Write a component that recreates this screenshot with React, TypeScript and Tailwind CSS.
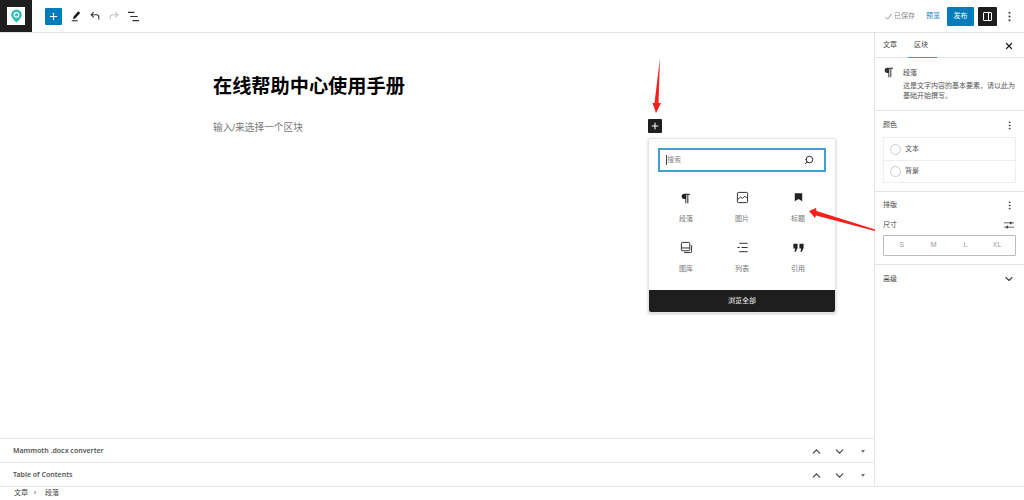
import { ChevronDown, ChevronUp, EllipsisVertical, Plus, Search, X } from "lucide-react";

const font = "font-['Liberation_Sans','Noto_Sans_CJK_SC',sans-serif]";

const ParagraphIcon = ({ className }: { className?: string }) => (
  <svg viewBox="0 0 24 24" className={className} fill="currentColor">
    <path d="M18 5.500H9.500a4 4 0 0 0 0 8H11V20h1.500V7H14v13h1.500V7H18z" />
  </svg>
);

const MetaRow = ({ title }: { title: string }) => (
  <div className="flex h-6 items-center border-t border-[#e4e4e4] pl-[13px] pr-[9px] pt-[1px]">
    <span className="flex-1 font-['Noto_Sans',sans-serif] text-[7px] font-semibold text-[#555]">{title}</span>
    <ChevronUp size={13} strokeWidth={2.2} className="mr-[10px] text-[#444]" />
    <ChevronDown size={13} strokeWidth={2.2} className="mr-[15px] text-[#444]" />
    <span className="h-0 w-0 border-x-[2.5px] border-t-[3px] border-x-transparent border-t-[#777]" />
  </div>
);

const blocks = [
  {
    label: "段落",
    icon: <ParagraphIcon className="h-4 w-4" />,
  },
  {
    label: "图片",
    icon: (
      <svg viewBox="0 0 14 14" className="h-[13px] w-[13px]" fill="none" stroke="currentColor">
        <rect x="1.500" y="1.500" width="11" height="11" rx="1" />
        <path d="M2 9l3-2.500 2 1.500 2.500-2.500L12 8" />
      </svg>
    ),
  },
  {
    label: "标题",
    icon: (
      <svg viewBox="0 0 14 14" className="h-[13px] w-[13px]" fill="currentColor">
        <path d="M3 2.500h8v8.500L7 8.500 3 11z" />
      </svg>
    ),
  },
  {
    label: "图库",
    icon: (
      <svg viewBox="0 0 14 14" className="h-[13px] w-[13px]" fill="none" stroke="currentColor">
        <rect x="1.500" y="1.500" width="9" height="9" rx="1" />
        <path d="M2 7.500h8M12.500 4.500v7a1 1 0 0 1-1 1H4.500" />
      </svg>
    ),
  },
  {
    label: "列表",
    icon: (
      <svg viewBox="0 0 14 14" className="h-[13px] w-[13px]" fill="none" stroke="currentColor">
        <path d="M3.500 2.500h9M1.500 7h2.500M6 7h6.500M3.500 11.500h9" />
      </svg>
    ),
  },
  {
    label: "引用",
    icon: (
      <svg viewBox="0 0 14 14" className="h-[13px] w-[13px]" fill="currentColor">
        <path d="M1.500 3h4.500v4.500L4 11.500H2.500L3.500 8h-2zM8 3h4.500v4.500l-2 4H9L10 8H8z" />
      </svg>
    ),
  },
];

const App = () => {
  return (
    <div className={`flex h-[500px] w-[1024px] flex-col overflow-hidden bg-white text-[#1e1e1e] ${font}`}>
      {/* top bar */}
      <header className="flex h-[33px] shrink-0 items-center border-b border-[#e4e4e4]">
        <div className="flex h-[32px] w-[32px] items-center justify-center bg-[#1e1e1e]">
          <div className="flex h-[18px] w-[18px] items-center justify-center bg-white">
            <svg viewBox="0 0 16 18" className="h-4 w-[13px]">
              <path d="M8 1a6.500 6.500 0 0 0-6.500 6.500C1.500 12 8 17 8 17s6.500-5 6.500-9.500A6.500 6.500 0 0 0 8 1z" fill="#2fc0b5" />
              <circle cx="8" cy="7.500" r="3.500" fill="white" />
              <circle cx="8" cy="7.500" r="2" fill="#2fc0b5" />
            </svg>
          </div>
        </div>
        <div className="ml-[13px] flex h-[17px] w-[17px] items-center justify-center rounded-[1px] bg-[#007cba] text-white">
          <Plus size={11} strokeWidth={2.5} />
        </div>
        <svg viewBox="0 0 14 14" className="ml-[8px] h-[12px] w-[12px] text-[#1e1e1e]" fill="currentColor">
          <path d="M9.500 1.500l2.500 2L6 10 3.500 10.500 4 8zM2 12h7v1H2z" />
        </svg>
        <svg viewBox="0 0 14 14" className="ml-[7px] h-[12px] w-[12px] text-[#333]" fill="none" stroke="currentColor" strokeWidth="1.300">
          <path d="M5.500 2.500L2.500 5.500l3 3M3 5.500h5.500a3 3 0 0 1 3 3V11" />
        </svg>
        <svg viewBox="0 0 14 14" className="ml-[7px] h-[12px] w-[12px] text-[#c4c4c4]" fill="none" stroke="currentColor" strokeWidth="1.300">
          <path d="M8.500 2.500l3 3-3 3M11 5.500H5.500a3 3 0 0 0-3 3V11" />
        </svg>
        <svg viewBox="0 0 14 14" className="ml-[7px] h-[13px] w-[13px] text-[#333]" fill="none" stroke="currentColor" strokeWidth="1.200">
          <path d="M1 2.500h7M3.500 7h8M6 11.500h7" />
        </svg>
        <div className="ml-auto flex items-center">
          <svg viewBox="0 0 10 10" className="h-[9px] w-[9px] text-[#8a8a8a]" fill="none" stroke="currentColor">
            <path d="M1.500 5.500L4 8l4.500-6" />
          </svg>
          <span className="ml-[1px] text-[7px] text-[#8a8a8a]">已保存</span>
          <span className="ml-[11px] text-[7px] text-[#007cba]">预览</span>
          <div className="ml-[7px] flex h-[19px] w-[27px] items-center justify-center rounded-[1px] bg-[#007cba] text-[7px] text-white">
            发布
          </div>
          <div className="ml-[4px] flex h-[19px] w-[19px] items-center justify-center rounded-[1px] bg-[#1e1e1e]">
            <div className="flex h-[9px] w-[9px] justify-end rounded-[1px] border border-white">
              <div className="w-[3px] border-l border-white" />
            </div>
          </div>
          <EllipsisVertical size={13} className="ml-[6px] mr-[8px] text-[#444]" />
        </div>
      </header>

      <div className="flex min-h-0 flex-1">
        {/* editor */}
        <main className="relative flex min-w-0 flex-1 flex-col">
          <div className="flex-1 pl-[213px] pt-[41px]">
            <h1 className="text-[19.2px] leading-[26px] font-bold text-black">在线帮助中心使用手册</h1>
            <p className="mt-[21px] text-[9.7px] leading-[14px] text-[#777]">输入/来选择一个区块</p>
          </div>

          <div className="absolute left-[648px] top-[86px] flex h-[14px] w-[14px] items-center justify-center rounded-[1px] bg-[#1e1e1e] text-white">
            <Plus size={10} strokeWidth={2.5} />
          </div>

          {/* block inserter */}
          <div className="absolute left-[648px] top-[105px] flex h-[175px] w-[188px] flex-col rounded-[2px] border border-[#e4e4e4] bg-white shadow-[0_1px_3px_rgba(0,0,0,0.2)]">
            <div className="mx-[9px] mt-[9px] flex h-[25px] items-center border-2 border-[#3f9fcf] pl-[6px] pr-[10px]">
              <span className="h-[10px] w-px bg-[#444]" />
              <span className="flex-1 text-[7px] text-[#888]">搜索</span>
              <Search size={10} strokeWidth={2.2} className="-scale-x-100 text-[#1e1e1e]" />
            </div>
            <div className="grid flex-1 grid-cols-3 content-start px-[9px] pt-[18px]">
              {blocks.map((b) => (
                <div key={b.label} className="flex h-[50px] flex-col items-center text-[#222]">
                  <div className="flex h-4 items-center">{b.icon}</div>
                  <span className="mt-[8px] text-[7px] leading-[10px] text-[#777]">{b.label}</span>
                </div>
              ))}
            </div>
            <div className="flex h-[24px] items-center justify-center rounded-b-[2px] bg-[#1e1e1e] text-[7px] font-medium text-[#ddd]">
              浏览全部
            </div>
          </div>

          {/* arrows */}
          <svg className="absolute left-[640px] top-[20px] h-[62px] w-[30px]" viewBox="0 0 30 62">
            <path d="M20 5L18.500 50 21 50 16 60 12.500 50 14.500 50z" fill="#f5201c" />
          </svg>
          <svg className="absolute left-[805px] top-[170px] h-[40px] w-[70px]" viewBox="0 0 70 40">
            <path d="M4 8L11 5 11.500 8 70 26.500 70 28 11 12.500 10 15z" fill="#f5201c" />
          </svg>

          <MetaRow title="Mammoth .docx converter" />
          <MetaRow title="Table of Contents" />
        </main>

        {/* sidebar */}
        <aside className="flex w-[150px] shrink-0 flex-col border-l border-[#e4e4e4] text-[7px] text-[#444]">
          <div className="flex h-[25px] items-center border-b border-[#e4e4e4] pl-[8px] pr-[10px] pt-[1px]">
            <span>文章</span>
            <span className="relative ml-[17px] flex h-full items-center">
              区块
              <span className="absolute -left-[6px] -right-[9px] -bottom-px h-[1.5px] bg-[#3b9cc9]" />
            </span>
            <X size={10} strokeWidth={3} className="ml-auto text-[#222]" />
          </div>
          <div className="flex h-[53px] border-b border-[#e4e4e4] pl-[6px] pr-[8px] pt-[6px]">
            <ParagraphIcon className="h-4 w-4 shrink-0 text-[#333]" />
            <div className="ml-[6px] mt-[4px]">
              <div className="leading-[10px]">段落</div>
              <p className="mt-[3px] leading-[10px] text-[#555]">这是文字内容的基本要素，请以此为基础开始撰写。</p>
            </div>
          </div>
          <div className="border-b border-[#e4e4e4] px-[8px] pb-[8px] pt-[8px]">
            <div className="flex h-[12px] items-center justify-between">
              <span>颜色</span>
              <EllipsisVertical size={11} className="mr-[1px]" />
            </div>
            <div className="mt-[6px] rounded-[1px] border border-[#eee]">
              {["文本", "背景"].map((t, i) => (
                <div key={t} className={`flex h-[22px] items-center pl-[6px] ${i ? "border-t border-[#eee]" : ""}`}>
                  <span className="h-[11px] w-[11px] rounded-full border border-[#ccc]" />
                  <span className="ml-[4px] text-[#555]">{t}</span>
                </div>
              ))}
            </div>
          </div>
          <div className="border-b border-[#e4e4e4] px-[8px] pb-[8px] pt-[7px]">
            <div className="flex h-[12px] items-center justify-between">
              <span>排版</span>
              <EllipsisVertical size={11} className="mr-[1px]" />
            </div>
            <div className="mt-[8px] flex h-[12px] items-center justify-between">
              <span>尺寸</span>
              <svg viewBox="0 0 12 10" className="mr-[2px] h-[10px] w-[10px] text-[#333]" fill="currentColor">
                <path d="M0 2h12v1H0zM0 7h12v1H0zM7 1h2v3H7zM3 6h2v3H3z" />
              </svg>
            </div>
            <div className="mt-[4px] grid h-[21px] grid-cols-4 items-center rounded-[1px] border border-[#bbb] px-[2px] text-center text-[#999]">
              <span>S</span>
              <span>M</span>
              <span>L</span>
              <span>XL</span>
            </div>
          </div>
          <div className="flex h-[28px] items-center justify-between px-[8px]">
            <span>高级</span>
            <ChevronDown size={12} strokeWidth={2.2} className="mr-[1px]" />
          </div>
        </aside>
      </div>

      {/* breadcrumb */}
      <footer className="flex h-[14px] shrink-0 items-center border-t border-[#e4e4e4] pl-[14px] text-[7px] text-[#444]">
        <span>文章</span>
        <span className="flex w-[17px] justify-center pr-[3px]">›</span>
        <span>段落</span>
      </footer>
    </div>
  );
};

export default App;
